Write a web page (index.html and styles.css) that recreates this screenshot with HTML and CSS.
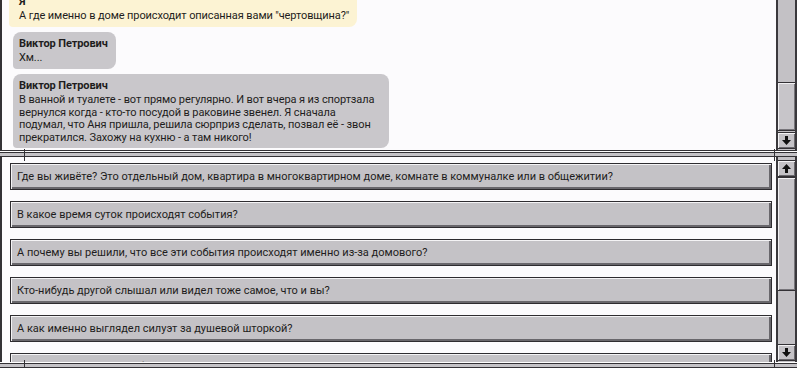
FILE: index.html
```html
<!DOCTYPE html>
<html lang="ru">
<head>
  <meta charset="UTF-8">
  <meta name="viewport" content="width=device-width, initial-scale=1.0">
  <title>Домовой — разговор</title>
  <link rel="stylesheet" href="styles.css">
</head>
<body>
  <div class="window">
    <section class="pane pane-chat">
      <div class="chat">
        <div class="msg msg-me">
          <div class="author">Я</div>
          <p>А где именно в доме происходит описанная вами "чертовщина?"</p>
        </div>
        <div class="msg">
          <div class="author">Виктор Петрович</div>
          <p>Хм...</p>
        </div>
        <div class="msg msg-long">
          <div class="author">Виктор Петрович</div>
          <p>В ванной и туалете - вот прямо регулярно. И вот вчера я из спортзала вернулся когда - кто-то посудой в раковине звенел. Я сначала подумал, что Аня пришла, решила сюрприз сделать, позвал её - звон прекратился. Захожу на кухню - а там никого!</p>
        </div>
      </div>
      <div class="scrollbar">
        <div class="track track-end"><div class="thumb thumb-chat"></div></div>
        <button class="arrow"><svg width="9" height="9" viewBox="0 0 9 9"><path d="M3 0H6V4H9L4.5 9L0 4H3Z"/></svg></button>
      </div>
    </section>

    <div class="splitter"></div>

    <section class="pane pane-choices">
      <div class="choices">
        <button class="choice">Где вы живёте? Это отдельный дом, квартира в многоквартирном доме, комнате в коммуналке или в общежитии?</button>
        <button class="choice">В какое время суток происходят события?</button>
        <button class="choice">А почему вы решили, что все эти события происходят именно из-за домового?</button>
        <button class="choice">Кто-нибудь другой слышал или видел тоже самое, что и вы?</button>
        <button class="choice">А как именно выглядел силуэт за душевой шторкой?</button>
        <button class="choice">На всякий случай - не обижайтесь, мы не ставим ваши слова под сомнение, но на всякий случай рассматриваем все варианты. Могли вы что-то перепутать или вам это показалось?</button>
      </div>
      <div class="scrollbar">
        <button class="arrow"><svg width="9" height="9" viewBox="0 0 9 9"><path d="M4.5 0L9 5H6V9H3V5H0Z"/></svg></button>
        <div class="track"><div class="thumb thumb-choices"></div></div>
        <button class="arrow"><svg width="9" height="9" viewBox="0 0 9 9"><path d="M3 0H6V4H9L4.5 9L0 4H3Z"/></svg></button>
      </div>
    </section>

    <div class="splitter splitter-bottom"></div>
  </div>
</body>
</html>
```

FILE: styles.css
```css
body {
  margin: 0;
  background: #fff;
  font-family: Roboto, "Noto Sans", sans-serif;
  font-size: 11px;
  line-height: 12.5px;
  color: #1e1d20;
  overflow: hidden;
}
.window {
  width: 797px;
  height: 368px;
  display: flex;
  flex-direction: column;
}
.pane {
  display: flex;
  flex-shrink: 0;
  background: #fcfbfd;
}
.pane-chat {
  height: 150px;
  border-bottom: 1px solid #333135;
}
.pane-choices {
  height: 205px;
}
.chat {
  flex: 1;
  overflow: hidden;
  display: flex;
  flex-direction: column;
  justify-content: flex-end;
  align-items: flex-start;
  gap: 5px;
  padding: 0 0 2px 11px;
  border-left: 2px solid #333135;
  letter-spacing: -0.1px;
}
.msg {
  background: #c9c7cb;
  border-radius: 8px 8px 8px 4px;
  padding: 6px 8px 4px 6px;
  flex-shrink: 0;
}
.msg p {
  margin: 0;
}
.author {
  font-weight: 700;
  margin-bottom: 2px;
}
.msg-me {
  background: #fcf3d3;
  margin-left: -4px;
  padding-left: 10px;
}
.msg-long {
  width: 362px;
}

/* scrollbars */
.scrollbar {
  width: 17px;
  display: flex;
  flex-direction: column;
  background: #c3c1c5;
  border-left: 2px solid #3a383c;
  border-right: 2px solid #3a383c;
}
.track {
  flex: 1;
  display: flex;
  flex-direction: column;
}
.track-end {
  justify-content: flex-end;
}
.thumb {
  background: #c7c5c9;
  border-top: 1px solid #333135;
  border-bottom: 1px solid #333135;
  box-shadow: inset 1px 1px #f2f1f3, inset -1px -1px #77757a;
}
.thumb-chat {
  height: 47px;
  margin-bottom: 1px;
}
.thumb-choices {
  height: 112px;
}
.arrow {
  height: 17px;
  padding: 0;
  display: flex;
  align-items: center;
  justify-content: center;
  background: #c4c2c6;
  border: 1px solid #333135;
  border-left: 0;
  border-right: 0;
  box-shadow: inset 1px 1px #f4f3f5, inset -1px -1px #69676c;
}
.arrow svg {
  fill: #111;
}
.scrollbar .arrow:first-child {
  margin-top: 3px;
}
.scrollbar .arrow:last-child {
  margin-bottom: 1px;
}

/* answer buttons */
.choices {
  flex: 1;
  overflow: hidden;
  display: flex;
  flex-direction: column;
  gap: 11px;
  padding: 6px 4px 0 8px;
  border-left: 2px solid #333135;
}
.choice {
  flex-shrink: 0;
  min-height: 27px;
  padding: 6px 8px 6px 6px;
  text-align: left;
  font: inherit;
  line-height: 13px;
  color: #1e1d20;
  background: #c4c2c6;
  border: 1px solid #2e2c30;
  box-shadow: inset 1px 1px #f4f3f5, inset -2px -2px #69676c;
}

/* pane dividers */
.splitter {
  position: relative;
  flex-shrink: 0;
  height: 3px;
  margin-top: 1px;
  background: #c4c2c6;
  border-top: 1px solid #333135;
  border-bottom: 1px solid #333135;
}
.splitter::before,
.splitter::after {
  content: "";
  position: absolute;
  top: -4px;
  width: 1px;
  height: 12px;
  background: #333135;
}
.splitter::before {
  left: 24px;
}
.splitter::after {
  left: 774px;
}
.splitter-bottom {
  margin-top: 1px;
}
```
